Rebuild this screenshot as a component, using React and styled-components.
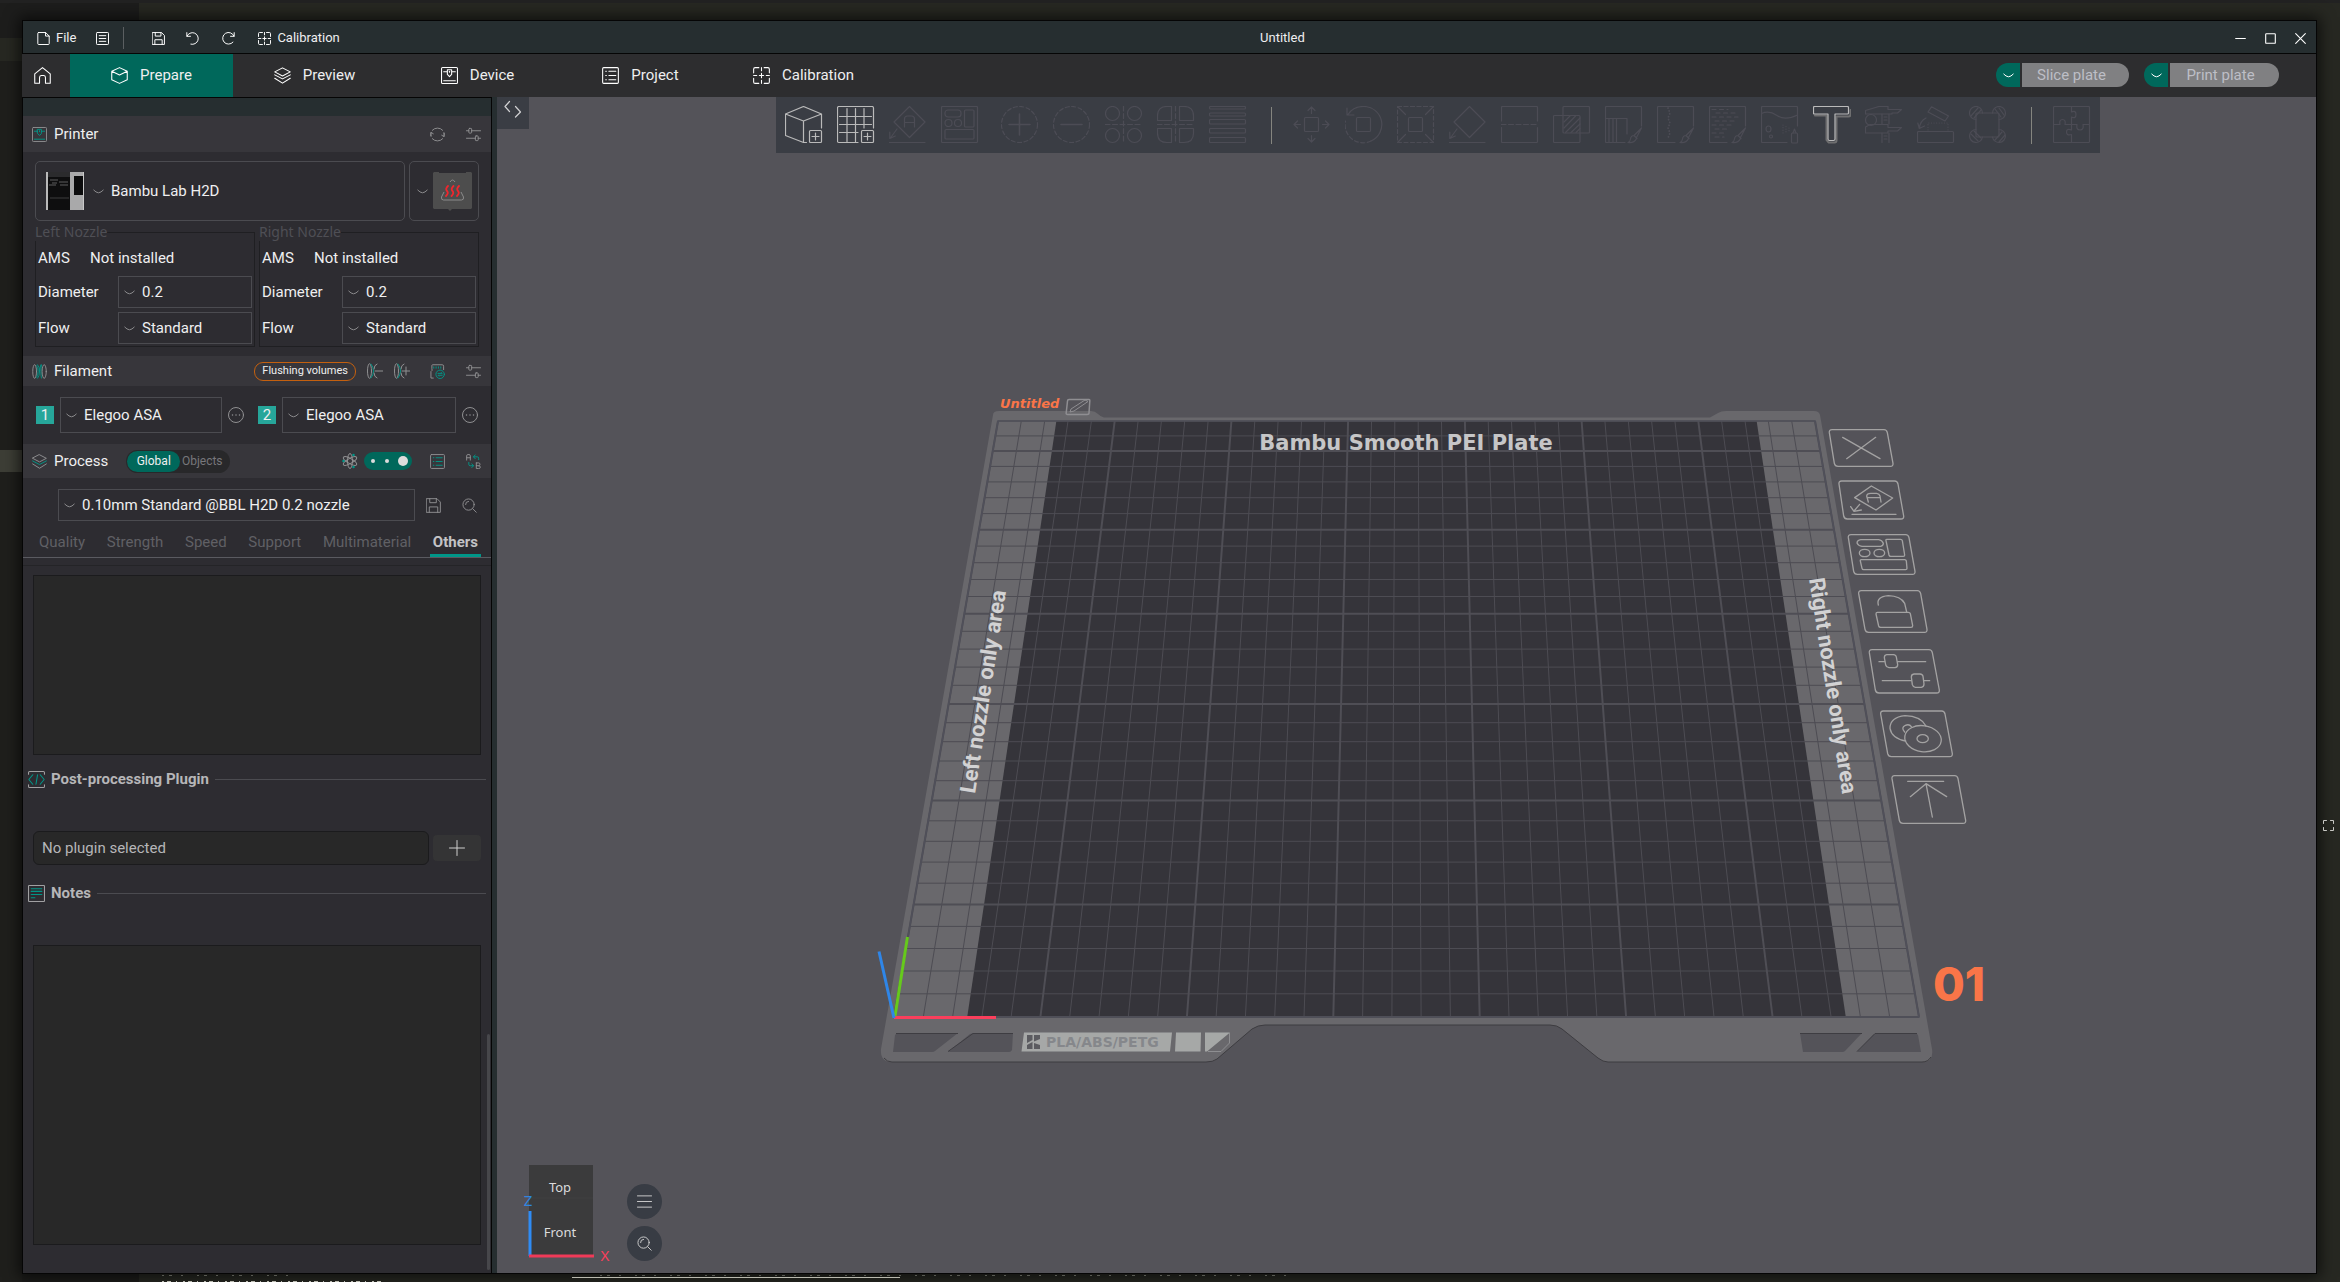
import React from "react";
import styled, { createGlobalStyle, css } from "styled-components";

const c = {
  black: "#050505",
  chrome: "#262e30",
  bar: "#2d2d2f",
  panel: "#2d2c31",
  section: "#37363b",
  line: "#4b4b50",
  field: "#282828",
  fieldLine: "#1b1b1d",
  text: "#efeff0",
  soft: "#b6b6b8",
  faint: "#606065",
  icon: "#909092",
  green: "#00685b",
  teal: "#009688",
  view: "#545359",
  strip: "#3a3d44",
  plate: "#69686c",
  bed: "#35343a",
  orange: "#fa7548",
};

const GlobalStyle = createGlobalStyle`
  * { box-sizing: border-box; }
  body {
    margin: 0;
    background: #272822;
    color: ${c.text};
    font: 15px/20px Roboto, "Noto Sans", sans-serif;
  }
  button, input, select, textarea { font: inherit; color: inherit; margin: 0; }
  button { padding: 0; border: 0; background: none; cursor: pointer; }
  svg { display: block; flex: none; }
`;

/* ---------- icons ---------- */

const Icon = ({ size = 15, box = 16, color = c.icon, w = 1, children, ...rest }) => (
  <svg
    width={size}
    height={size}
    viewBox={`0 0 ${box} ${box}`}
    fill="none"
    stroke={color}
    strokeWidth={w}
    strokeLinecap="round"
    strokeLinejoin="round"
    aria-hidden="true"
    {...rest}
  >
    {children}
  </svg>
);

const Chevron = ({ color = "#8a8a8c" }) => (
  <svg width="11" height="5" viewBox="0 0 11 5" fill="none" stroke={color} strokeWidth="1" aria-hidden="true">
    <path d="M.5 .8 Q3 3.6 5.5 3.8 Q8 3.6 10.5 .8" />
  </svg>
);

const calibrationPath = (
  <>
    <path d="M5.500.6H2Q.6.6.6 2V5.500M10.500.6H14Q15.400.6 15.400 2V5.500M5.500 15.400H2Q.6 15.400.6 14V10.500M10.500 15.400H14Q15.400 15.400 15.400 14V10.500" />
    <path d="M8 .6V3.500M8 12.500V15.400M.6 8H3.500M12.500 8H15.400M8 6V10M6 8H10" />
  </>
);
const printerGlyph = (accent) => (
  <>
    <rect x=".5" y=".5" width="15" height="15" rx="1" />
    <g stroke={accent}>
      <path d="M2.500 4.500H6M10 4.500h3.500M6 2.500h4v4.500L8 9 6 7zM2.500 13h11" />
      <path d="M8 4v1" />
    </g>
  </>
);
const layersGlyph = (accent) => (
  <>
    <path d="M8 .8L15.300 4.600 8 8.400.7 4.600z" />
    <path stroke={accent} d="M.7 7.400L8 11.200l7.300-3.800" />
    <path d="M.7 10.600L8 15.200l7.300-4.600" />
  </>
);
const sliders = (
  <>
    <path d="M.5 4H3M6 4h9.500M.5 12H10M13 12h2.500" />
    <rect x="3" y="1.500" width="3" height="5" rx=".8" />
    <rect x="10" y="9.500" width="3" height="5" rx=".8" />
  </>
);
const floppy = (
  <>
    <path d="M.7.7h11l3.600 3.600v11H.7z" />
    <path d="M4 .7v4.300h7V.7M3.500 15.300V9.500h9v5.800" />
  </>
);
const listGlyph = (accent) => (
  <>
    <rect x=".6" y=".6" width="14.800" height="14.800" rx="1" />
    <path stroke={accent} d="M3.500 4h.6M6.500 4H13M3.500 8h.6M6.500 8H13M3.500 12h.6M6.500 12H13" />
  </>
);
const magnifier = (
  <>
    <circle cx="7" cy="7" r="6" />
    <path d="M11.500 11.500L15.200 15.200M3.800 7A3.200 3.200 0 0 1 7 3.600" />
  </>
);

/* ---------- desktop and window ---------- */

const Desktop = styled.div`
  display: flex;
  flex-direction: column;
  height: 100vh;
  padding-top: 20px;
  overflow: hidden;
  background:
    linear-gradient(#222, #222) 0 0 / 100% 3px no-repeat,
    linear-gradient(#1d1d1c, #1d1d1c) 0 3px / 139px 35px no-repeat,
    linear-gradient(#3d3e36, #3d3e36) 0 450px / 22px 22px no-repeat,
    linear-gradient(#1f1f1c, #1f1f1c) 0 61px / 22px 100% no-repeat,
    linear-gradient(#1c1c1a, #1c1c1a) 0 100% / 139px 8px no-repeat,
    #272822;
`;

const DesktopRow = styled.div`
  display: flex;
  flex: 1;
  min-height: 0;
  padding-left: 22px;
`;

const DesktopEdge = styled.div`
  display: flex;
  align-items: center;
  justify-content: center;
  flex: none;
  width: 23px;
  padding-top: 356px;
`;

const DesktopFoot = styled.div`
  flex: none;
  height: 8px;
`;

const AppWindow = styled.div`
  display: flex;
  flex-direction: column;
  flex: 1;
  min-width: 0;
  border: 1px solid ${c.black};
  border-width: 1px 1px 1px 0;
  box-shadow: 0 0 14px 3px rgba(0, 0, 0, 0.65);
`;

const TitleBar = styled.header`
  display: flex;
  align-items: center;
  flex: none;
  height: 33px;
  padding: 2px 9px 0 14px;
  background: ${c.chrome};
  border: solid ${c.black};
  border-width: 0 0 1px 1px;
  font-size: 13px;
`;

const TitleButton = styled.button`
  display: flex;
  align-items: center;
  gap: 6px;
  height: 22px;
  margin-right: ${(p) => p.$after || 0}px;
`;

const TitleRule = styled.span`
  width: 1px;
  height: 22px;
  margin-right: 28px;
  background: #5b5f61;
`;

const TitleText = styled.h1`
  flex: 1;
  margin: 0;
  font: inherit;
  text-align: center;
`;

const WindowButton = styled.button`
  display: grid;
  place-items: center;
  width: 30px;
  height: 22px;
  &:last-child { width: 14px; margin-left: 8px; }
`;

const TabBar = styled.nav`
  display: flex;
  align-items: stretch;
  flex: none;
  height: 43px;
  background: ${c.bar};
`;

const HomeButton = styled.button`
  display: grid;
  place-items: center;
  width: 48px;
  padding-right: 7px;
`;

const MainTab = styled.button`
  display: flex;
  align-items: center;
  justify-content: center;
  gap: 12px;
  width: 163px;
  padding-bottom: 1px;
  background: ${(p) => (p.$active ? c.green : "transparent")};
`;

const TabActions = styled.div`
  display: flex;
  align-items: center;
  gap: 15px;
  margin-left: auto;
  padding: 0 37px 1px 0;
`;

const SplitButton = styled.div`
  display: flex;
  gap: 2px;
  height: 24px;
`;

const SplitMenu = styled.button`
  display: grid;
  place-items: center;
  width: 24px;
  border-radius: 12px 0 0 12px;
  background: ${c.green};
`;

const SplitMain = styled.button`
  width: ${(p) => p.$width}px;
  padding-right: 8px;
  border-radius: 0 12px 12px 0;
  background: #808082;
  color: #bdbec6;
`;

const Body = styled.div`
  display: flex;
  flex: 1;
  min-height: 0;
  background: ${c.chrome};
`;

/* ---------- sidebar ---------- */

const Sidebar = styled.aside`
  display: flex;
  flex-direction: column;
  flex: none;
  width: 470px;
  margin-right: 5px;
  padding-top: 18px;
  background: linear-gradient(${c.chrome} 18px, ${c.panel} 18px);
  border: solid ${c.black};
  border-width: 1px 1px 0 1px;
`;

const SectionBar = styled.div`
  display: flex;
  align-items: center;
  flex: none;
  gap: 7px;
  height: ${(p) => p.$height}px;
  padding: 0 10px 0 9px;
  background: ${c.section};
`;

const SectionTitle = styled.h2`
  margin: 0;
  font: inherit;
`;

const Tools = styled.div`
  display: flex;
  align-items: center;
  gap: ${(p) => p.$gap || 21}px;
  margin-left: auto;
  padding-left: ${(p) => p.$lead || 0}px;
`;

const IconButton = styled.button`
  display: grid;
  place-items: center;
`;

const PrinterRow = styled.div`
  display: flex;
  gap: 4px;
  padding: 9px 12px 2px;
`;

const PrinterCard = styled.button`
  display: flex;
  align-items: center;
  gap: ${(p) => p.$gap}px;
  flex: ${(p) => (p.$grow ? "1" : "none")};
  height: 60px;
  padding: 0 ${(p) => (p.$grow ? 10 : 6)}px 0 ${(p) => (p.$grow ? 10 : 7)}px;
  border: 1px solid ${c.line};
  border-radius: 5px;
  text-align: left;
`;

const PrinterName = styled.span`
  margin-left: -2px;
`;

const Nozzles = styled.div`
  display: grid;
  grid-template-columns: 1fr 1fr;
  gap: 4px;
  padding: 0 12px 9px;
`;

const NozzleBox = styled.fieldset`
  display: flex;
  flex-direction: column;
  gap: 4px;
  min-width: 0;
  margin: 0;
  padding: 0 2px 2px;
  border: 1px solid #1f1f22;
`;

const NozzleLegend = styled.legend`
  margin-left: -3px;
  padding: 0;
  color: #4f4f55;
  font: 14px/18px "Noto Sans", sans-serif;
`;

const NozzleStatus = styled.div`
  display: flex;
  align-items: center;
  height: 35px;
  margin-bottom: -4px;
  padding-bottom: 2px;
`;

const StatusKey = styled.span`
  width: 52px;
`;

const NozzleField = styled.label`
  display: flex;
  align-items: center;
`;

const FieldKey = styled.span`
  width: 80px;
`;

const ComboFrame = styled.span`
  display: grid;
  align-items: center;
  flex: 1;
  min-width: 0;
  height: ${(p) => p.$height || 32}px;
  border: 1px solid ${c.line};
  & > * { grid-area: 1 / 1; }
  & > svg { margin-left: 5px; pointer-events: none; }
`;

const ComboSelect = styled.select`
  width: 100%;
  height: 100%;
  padding: 0 4px 0 23px;
  border: 0;
  border-radius: 0;
  outline: 0;
  appearance: none;
  background: transparent;
`;

const Combo = ({ label, value, height }) => (
  <ComboFrame $height={height}>
    <ComboSelect aria-label={label} defaultValue={value}>
      <option>{value}</option>
    </ComboSelect>
    <Chevron />
  </ComboFrame>
);

const FlushButton = styled.button`
  height: 19px;
  padding: 0 7px;
  border: 1px solid #c4600f;
  border-radius: 9px;
  font-size: 11px;
  line-height: 16px;
`;

const FilamentRow = styled.div`
  display: grid;
  grid-template-columns: 208fr 220fr;
  gap: 14px;
  padding: 11px 13px;
`;

const FilamentSlot = styled.div`
  display: flex;
  align-items: center;
  gap: 6px;
  min-width: 0;
`;

const SlotBadge = styled.span`
  width: 18px;
  height: 18px;
  background: #26a69a;
  line-height: 18px;
  text-align: center;
`;

const ScopeSwitch = styled.div`
  display: flex;
  height: 23px;
  margin-left: 11px;
  padding: 1px;
  border-radius: 12px;
  background: #28282a;
  font-size: 12px;
`;

const ScopeOption = styled.button`
  width: ${(p) => p.$width}px;
  padding-right: ${(p) => (p.$active ? 0 : 5)}px;
  border-radius: 11px;
  background: ${(p) => (p.$active ? c.green : "transparent")};
  color: ${(p) => (p.$active ? c.text : "#77777b")};
`;

const ModeSwitch = styled.button`
  display: flex;
  align-items: center;
  justify-content: space-between;
  width: 48px;
  height: 18px;
  padding: 0 4px 0 7px;
  border-radius: 9px;
  background: ${c.green};
`;

const ModeDot = styled.span`
  width: ${(p) => (p.$on ? 10 : 4)}px;
  height: ${(p) => (p.$on ? 10 : 4)}px;
  border-radius: 50%;
  background: #dcdcdc;
`;

const PresetRow = styled.div`
  display: flex;
  align-items: center;
  padding: 11px 14px 0 35px;
`;

const PresetTools = styled.div`
  display: flex;
  gap: 21px;
  margin-left: 11px;
`;

const SettingTabs = styled.div`
  display: flex;
  justify-content: space-between;
  flex: none;
  height: 37px;
  padding: 0 10px 0 13px;
  border-bottom: 1px solid #5a5a60;
`;

const SettingTab = styled.button`
  padding: 11px 3px 2px;
  color: ${c.faint};
  border-bottom: 3px solid transparent;
  ${(p) => p.$active && css`
    color: #c3c3c5;
    font-weight: 700;
    border-color: ${c.teal};
  `}
`;

const SettingsScroll = styled.div`
  position: relative;
  flex: 1;
  min-height: 0;
  margin-top: 7px;
  padding: 9px 0 0;
  border-top: 1px solid #242427;
`;

const ScrollThumb = styled.span`
  position: absolute;
  right: 1px;
  bottom: 3px;
  width: 3px;
  height: 236px;
  border-radius: 2px;
  background: #47474b;
`;

const NoteBox = styled.textarea`
  display: block;
  width: calc(100% - 20px);
  height: ${(p) => p.$height}px;
  margin: 0 10px;
  padding: 6px;
  border: 1px solid ${c.fieldLine};
  outline: 0;
  resize: none;
  background: ${c.field};
`;

const GroupHeading = styled.h3`
  display: flex;
  align-items: center;
  gap: 6px;
  height: 20px;
  margin: ${(p) => p.$top}px 5px ${(p) => p.$bottom}px;
  color: ${c.soft};
  font-size: 15px;
  font-weight: 700;
  &::after {
    content: "";
    flex: 1;
    height: 1px;
    background: ${c.line};
  }
`;

const PluginRow = styled.div`
  display: flex;
  align-items: center;
  gap: 4px;
  padding: 0 10px;
`;

const PluginInput = styled.input`
  flex: 1;
  min-width: 0;
  height: 34px;
  padding: 0 8px;
  border: 1px solid ${c.fieldLine};
  border-radius: 6px;
  outline: 0;
  background: ${c.field};
  color: ${c.soft};
`;

const AddButton = styled.button`
  display: grid;
  place-items: center;
  width: 48px;
  height: 26px;
  border-radius: 4px;
  background: #343435;
`;

const Nozzle = ({ side }) => (
  <NozzleBox>
    <NozzleLegend>{side} Nozzle</NozzleLegend>
    <NozzleStatus>
      <StatusKey>AMS</StatusKey>
      <span>Not installed</span>
    </NozzleStatus>
    <NozzleField>
      <FieldKey>Diameter</FieldKey>
      <Combo label={`${side} diameter`} value="0.2" />
    </NozzleField>
    <NozzleField>
      <FieldKey>Flow</FieldKey>
      <Combo label={`${side} flow`} value="Standard" />
    </NozzleField>
  </NozzleBox>
);

const Filament = ({ index, name }) => (
  <FilamentSlot>
    <SlotBadge>{index}</SlotBadge>
    <Combo label={`Filament ${index}`} value={name} height={36} />
    <IconButton aria-label={`Edit filament ${index}`}>
      <Icon size={16}>
        <circle cx="8" cy="8" r="7.500" />
        <path strokeWidth="1.500" d="M4.500 8h.01M8 8h.01M11.500 8h.01" />
      </Icon>
    </IconButton>
  </FilamentSlot>
);

const PrinterPicture = () => (
  <svg width="38" height="38" viewBox="0 0 38 38" aria-hidden="true">
    <rect width="38" height="38" fill="#0e0e0f" />
    <rect width="24" height="5" fill="#2b2b2d" />
    <rect width="2" height="38" fill="#b9b9b9" />
    <path d="M4 8h8M13 10h9M3 13h7M14 13h8M6 11h5" stroke="#5c5c5e" />
    <path d="M4 26h19" stroke="#3d3d3f" />
    <rect x="24" width="14" height="38" fill="#a9a9aa" />
    <rect x="28" y="4" width="10" height="19" fill="#0c0c0d" />
    <rect x="37" width="1" height="38" fill="#c9c9c9" />
  </svg>
);

const PlatePicture = () => (
  <svg width="39" height="39" viewBox="0 0 39 39" fill="none" aria-hidden="true">
    <path fill="#4d4d4d" d="M1 0h5v1h27V0h5l1 1v35l-1 1H19l-2 2-2-2H1l-1-1V1z" />
    <path stroke="#8b8b8b" d="M17 10Q19.500 6 22 10M11 20L8.500 25Q8 28 10.500 28H28.500Q31 28 30.500 25L28 20" />
    <path
      stroke="#f0262d"
      strokeWidth="1.800"
      strokeLinecap="round"
      d="M15 14q-3 3-1 5t-1 5M20.500 14q-3 3-1 5t-1 5M26 14q-3 3-1 5t-1 5"
    />
  </svg>
);

const settingTabs = ["Quality", "Strength", "Speed", "Support", "Multimaterial", "Others"];

const SettingsPanel = () => (
  <Sidebar>
    <SectionBar $height={36}>
      <Icon>{printerGlyph(c.teal)}</Icon>
      <SectionTitle>Printer</SectionTitle>
      <Tools>
        <IconButton aria-label="Sync printer">
          <Icon>
            <path d="M2.500 3.500A7.300 7.300 0 0 1 13.500 3.500M13.500 12.500A7.300 7.300 0 0 1 2.500 12.500" />
            <path d="M1.200 9.800Q.4 8 1 5.800M14.800 6.200Q15.600 8 15 10.200M.8 9.500L1.200 5.800 3.500 7.200M15.200 6.500L14.800 10.200 12.500 8.800" />
          </Icon>
        </IconButton>
        <IconButton aria-label="Printer settings"><Icon>{sliders}</Icon></IconButton>
      </Tools>
    </SectionBar>
    <PrinterRow>
      <PrinterCard $grow $gap={9}>
        <PrinterPicture />
        <Chevron />
        <PrinterName>Bambu Lab H2D</PrinterName>
      </PrinterCard>
      <PrinterCard $gap={5} aria-label="Plate type">
        <Chevron />
        <PlatePicture />
      </PrinterCard>
    </PrinterRow>
    <Nozzles>
      <Nozzle side="Left" />
      <Nozzle side="Right" />
    </Nozzles>

    <SectionBar $height={30}>
      <Icon>
        <ellipse cx="2.800" cy="8" rx="2" ry="7.300" />
        <g stroke={c.teal}>
          <path d="M6 .8Q8 3 8 8T6 15.200M9.500 .8Q8 4 8 8" />
          <path d="M5 2Q6.500 5 6.500 8T5 14M10 1Q9.500 4 9.500 8T10 15" />
        </g>
        <ellipse cx="13" cy="8" rx="2.200" ry="7.300" />
      </Icon>
      <SectionTitle>Filament</SectionTitle>
      <Tools $gap={11}>
        <FlushButton>Flushing volumes</FlushButton>
        <IconButton aria-label="Remove filament">
          <Icon size={16}>
            <ellipse cx="2.500" cy="8" rx="2" ry="7.300" />
            <path stroke={c.teal} d="M4 1Q6.500 4 6.500 8T4 15" />
            <path d="M10 1Q7 2 7 6M10 15Q7 14 7 10M8 8h8" />
          </Icon>
        </IconButton>
        <IconButton aria-label="Add filament">
          <Icon size={16}>
            <ellipse cx="2.500" cy="8" rx="2" ry="7.300" />
            <path stroke={c.teal} d="M4 1Q6.500 4 6.500 8T4 15" />
            <path d="M10 1Q7 2 7 6M10 15Q7 14 7 10M8 8h8M12 4v8" />
          </Icon>
        </IconButton>
        <Tools $lead={9}>
          <IconButton aria-label="Sync filaments">
            <Icon>
              <path d="M3.500 15H1V8Q3 7 2 5V1.500Q2 .8 3 .8h10q1.500 0 1.500 1.500V6" />
              <g stroke={c.teal}>
                <path d="M4 3v1.500M6.500 3v1.500M9 3v1.500M11.500 3v1.500" />
                <circle cx="10.800" cy="11" r="4.500" />
                <path d="M8.500 10h4.500l-1-1M13 12H8.500l1 1" />
              </g>
            </Icon>
          </IconButton>
          <IconButton aria-label="Filament settings"><Icon>{sliders}</Icon></IconButton>
        </Tools>
      </Tools>
    </SectionBar>
    <FilamentRow>
      <Filament index="1" name="Elegoo ASA" />
      <Filament index="2" name="Elegoo ASA" />
    </FilamentRow>

    <SectionBar $height={34}>
      <Icon>{layersGlyph(c.teal)}</Icon>
      <SectionTitle>Process</SectionTitle>
      <ScopeSwitch>
        <ScopeOption $active $width={53}>Global</ScopeOption>
        <ScopeOption $width={49}>Objects</ScopeOption>
      </ScopeSwitch>
      <Tools $gap={6}>
        <Icon size={16}>
          <ellipse cx="8" cy="8" rx="2.500" ry="7.500" />
          <ellipse cx="8" cy="8" rx="2.500" ry="7.500" transform="rotate(60 8 8)" />
          <ellipse cx="8" cy="8" rx="2.500" ry="7.500" transform="rotate(120 8 8)" />
          <path stroke={c.teal} strokeWidth="2.500" d="M11.500 2h.01M1.500 8h.01M11.500 14h.01" />
        </Icon>
        <ModeSwitch aria-label="Expert mode">
          <ModeDot />
          <ModeDot />
          <ModeDot $on />
        </ModeSwitch>
      </Tools>
      <PresetTools>
        <IconButton aria-label="Compare list"><Icon>{listGlyph(c.teal)}</Icon></IconButton>
        <IconButton aria-label="Compare presets">
          <Icon>
            <path d="M.7 6.500V2Q.7.6 2 .6h1.200Q4.600.6 4.600 2v4.500M.7 4h3.900" />
            <path d="M11 9.500h2.500q1.400 0 1.400 1.500T13.500 12.500H11M13.500 12.500q1.800 0 1.800 1.500t-1.800 1.500H11v-6" />
            <path stroke={c.teal} d="M13.500 6V4.500Q13.500 3 12 3H8M9.800 1L8 3l1.800 2M3 9v2q0 1.500 1.500 1.500H8M6.200 10.500L8 12.500l-1.800 2" />
          </Icon>
        </IconButton>
      </PresetTools>
    </SectionBar>
    <PresetRow>
      <Combo label="Process preset" value="0.10mm Standard @BBL H2D 0.2 nozzle" />
      <PresetTools>
        <IconButton aria-label="Save preset"><Icon>{floppy}</Icon></IconButton>
        <IconButton aria-label="Search settings"><Icon>{magnifier}</Icon></IconButton>
      </PresetTools>
    </PresetRow>
    <SettingTabs role="tablist">
      {settingTabs.map((name) => (
        <SettingTab key={name} role="tab" aria-selected={name === "Others"} $active={name === "Others"}>
          {name}
        </SettingTab>
      ))}
    </SettingTabs>

    <SettingsScroll>
      <NoteBox $height={180} aria-label="Post-processing scripts" />
      <GroupHeading $top={14} $bottom={42}>
        <Icon size={17} color="#a0a0a2">
          <path d="M.5 3V1.500Q.5.5 1.500.5h13q1 0 1 1V3M.5 13v1.500q0 1 1 1h13q1 0 1-1V13" />
          <path stroke={c.teal} d="M4.500 3.500L.8 8l3.700 4.500M11.500 3.500L15.200 8l-3.700 4.500M9 3.500l-1.500 9" />
        </Icon>
        Post-processing Plugin
      </GroupHeading>
      <PluginRow>
        <PluginInput aria-label="Plugin" defaultValue="No plugin selected" readOnly />
        <AddButton aria-label="Add plugin">
          <Icon size={16} color="#cfcfcf"><path d="M8 .5v15M.5 8h15" /></Icon>
        </AddButton>
      </PluginRow>
      <GroupHeading $top={18} $bottom={42}>
        <Icon size={17} color="#a0a0a2">
          <rect x=".5" y=".5" width="15" height="15" rx=".5" />
          <path stroke={c.teal} d="M3 3.500h10M3 6h10M3 9h10M3 12h3.500" />
        </Icon>
        Notes
      </GroupHeading>
      <NoteBox $height={300} aria-label="Notes" />
      <ScrollThumb />
    </SettingsScroll>
  </Sidebar>
);

/* ---------- 3D view ---------- */

const Viewport = styled.main`
  position: relative;
  flex: 1;
  min-width: 0;
  overflow: hidden;
  background: ${c.view};
`;

const ViewTop = styled.div`
  display: flex;
  align-items: flex-start;
`;

const CollapseButton = styled.button`
  display: grid;
  place-items: center;
  flex: none;
  width: 32px;
  height: 32px;
  margin-right: 31px;
  padding-bottom: 8px;
  background: ${c.strip};
`;

const ToolStrip = styled.div`
  display: flex;
  align-items: center;
  gap: 14px;
  height: 56px;
  margin: 0 auto;
  padding: 0 9px;
  background: ${c.strip};
`;

const ToolButton = styled.button`
  width: 38px;
  height: 38px;
  margin-right: ${(p) => (p.$spaced ? 8 : 0)}px;
`;

const ToolRule = styled.span`
  width: 1px;
  height: 37px;
  margin: 0 7px 0 10px;
  background: #85857f;
`;

const diamond = <path d="M20.500.5L36 16 20.500 31.500 5 16z" />;
const fallArrow = <path d="M8 23L1 32.500M.8 26v6.500l5.500-2.500M0 36.500h36" />;
const brush = <path d="M36.500 22l-5 9.500M36.500 22l-7.500 7.500M29 29.500l3 3M29 29.500q-3 0-3.500 3.500-.5 3-2.500 3.500 6 1 8.500-4" />;
const sheet = (bottom) => <path d={`M36.500 20V1.500q0-1-1-1H1.500q-1 0-1 1v34q0 1 1 1H${bottom}`} />;

const tools = [
  ["Add object", true, <>
    <path d="M18.500.5L36.500 8 18.500 15 .5 8zM.5 8v21.500L18.500 36.500h3M18.500 15v21M36.500 8v14" />
    <rect x="24.500" y="24.500" width="12" height="12" rx="1" />
    <path d="M30.500 27v7M27 30.500h7" />
  </>],
  ["Add plate", true, <>
    <path d="M21 36.500H2q-1.500 0-1.500-1.500V2Q.5.5 2 .5h33q1.500 0 1.500 1.500v20" />
    <path d="M10 2.500v33M18.500 2.500v33M27 2.500V22M2.500 10.500h32M2.500 18.500h32M2.500 26.500H21" />
    <rect x="24.500" y="24.500" width="12" height="12" rx="1" />
    <path d="M30.500 27v7M27 30.500h7" />
  </>],
  ["Auto orient", false, <>
    {diamond}{fallArrow}
    <path d="M15.500 21v-8q0-3 3-3h4q3 0 3 3v8M15.500 16.500h10" />
  </>],
  ["Arrange", false, <>
    <rect x=".5" y=".5" width="36" height="36" rx="1" />
    <rect x="4" y="4" width="16" height="7" rx="3" />
    <circle cx="7.500" cy="17" r="3.500" /><circle cx="17" cy="17" r="3.500" />
    <rect x="23.500" y="4" width="9.500" height="17" rx="1" />
    <rect x="4" y="23.500" width="29" height="9.500" rx="1" />
  </>, true],
  ["Add instance", false, <>
    <circle cx="18.500" cy="18.500" r="18" strokeDasharray="4 2.500" />
    <path strokeWidth="1.600" d="M18.500 8v21M8 18.500h21" />
  </>],
  ["Remove instance", false, <>
    <circle cx="18.500" cy="18.500" r="18" strokeDasharray="4 2.500" />
    <path strokeWidth="1.600" d="M8 18.500h21" />
  </>],
  ["Split to objects", false, <>
    <circle cx="7.500" cy="7.500" r="7" /><circle cx="29.500" cy="7.500" r="7" />
    <circle cx="7.500" cy="29.500" r="7" /><circle cx="29.500" cy="29.500" r="7" />
    <path strokeDasharray="5 2.500" d="M18.500 0v37M0 18.500h37" />
  </>],
  ["Split to parts", false, <>
    <path d="M14.500.5v14H.5V10Q.5.5 10 .5zM22.500.5v14h14V10Q36.500.5 27 .5zM14.500 36.500v-14H.5V27q0 9.500 9.500 9.500zM22.500 36.500v-14h14V27q0 9.500-9.500 9.500z" />
    <path strokeDasharray="5 2.500" d="M18.500 0v37M0 18.500h37" />
  </>],
  ["Layer height", false, <>
    <rect x=".5" y=".5" width="36" height="2.500" rx="1" /><rect x=".5" y="7" width="36" height="3" rx="1" />
    <rect x=".5" y="13.500" width="36" height="4.500" rx="1" /><rect x=".5" y="22.500" width="36" height="4.500" rx="1" />
    <rect x=".5" y="31.500" width="36" height="5" rx="1" />
  </>],
  null,
  ["Move", false, <>
    <rect x="11.500" y="11.500" width="14" height="14" rx="1" />
    <path d="M18.500 1v6.500M15 4.500L18.500 1 22 4.500M18.500 36v-6.500M15 32.500l3.500 3.500 3.500-3.500M1 18.500h6.500M4.500 15L1 18.500 4.500 22M36 18.500h-6.500M32.500 15l3.500 3.500-3.500 3.500" />
  </>],
  ["Rotate", false, <>
    <rect x="11.500" y="11.500" width="14" height="14" rx="1" />
    <path d="M3 8.500Q8 .5 18.500.5A18 18 0 0 1 26 35M2 2v7h7" />
    <path strokeDasharray="4 2.500" d="M26 35A18 18 0 0 1 .5 15" />
  </>],
  ["Scale", false, <>
    <rect x="11.500" y="11.500" width="14" height="14" rx="1" />
    <rect x=".5" y=".5" width="36" height="36" strokeDasharray="4 2.500" />
    <path d="M1 1l7.500 7.500M36 1l-7.500 7.500M1 36l7.500-7.500M36 36l-7.500-7.500" />
  </>],
  ["Lay on face", false, <>{diamond}{fallArrow}</>],
  ["Cut", false, <>
    <path d="M.5 15V1.500q0-1 1-1h34q1 0 1 1V15M.5 21.500v14q0 1 1 1h34q1 0 1-1v-14" />
    <path strokeDasharray="5 2.500" d="M0 18.500h37" />
  </>],
  ["Mesh boolean", false, <>
    <rect x=".5" y="9.500" width="26.500" height="27" rx="1" />
    <rect x="10" y=".5" width="26.500" height="26.500" rx="1" />
    <path d="M11 16l6-6M11 22L22.500 10M12.500 26.500L27 12M18 26.500L27 18M23 26.500l4-4" />
  </>],
  ["Supports", false, <>{sheet(20)}<path d="M.5 12.500H22V28M4 13v23M8 13v23M11.500 13v23" />{brush}</>],
  ["Seam", false, <>{sheet(18)}<path strokeDasharray=".1 3" strokeWidth="1.800" d="M11 2l2 5-2 5 2 5-2 5 2 5-2 5" />{brush}</>],
  ["Colour painting", false, <>{sheet(18)}<path strokeDasharray="4 3.500" d="M3 3.500h16M7 7h22M3 11h26M6 15h20M3 19h20M6 23h14M3 27h14M6 31h9" />{brush}</>],
  ["Fuzzy skin", false, <>
    {sheet(26)}
    <path d="M.5 7.500Q8 4 16 9.500T36.500 9" />
    <ellipse cx="7.500" cy="23" rx="2.500" ry="3" /><circle cx="10" cy="30.500" r="1.500" />
    <rect x="30.500" y="27" width="6" height="10" rx="1" /><path d="M32 27l1.500-4 1.500 4" />
    <path strokeDasharray=".1 2.500" d="M22 19v9M25 20.500v6M28 22v3" />
  </>],
  ["Text", true, <>
    <path stroke="#6f6f70" strokeWidth="2" d="M2 9.500h11.500V34l2 2.500h6q2 0 2-2V10.500h12q2 0 2-2V4" />
    <path d="M1.500.5h33q1 0 1 1v5.500q0 1-1 1H22v25q0 1.500-1.500 1.500h-4q-1.500 0-1.500-1.500V8H1.500q-1 0-1-1V1.500q0-1 1-1z" />
  </>],
  ["Measure", false, <>
    <path d="M.5 4.500L14 .5h9v3h13.500l-4 3.500H27v1H.5zM.5 21L5 18.500h18v3h13.500l-4 3.500H23v2H.5z" />
    <circle cx="6" cy="14" r="5.500" />
    <path d="M17 8v10M24 8v10M19 11h3M19 14h3M17 27v9.500M24 27v9.500M19 30h3M19 33h3" />
  </>],
  ["Assemble", false, <>
    <rect x=".5" y="25.500" width="36" height="11" rx="1" />
    <path d="M14.500.8l17 9.200-3.500 5-17-9zM9 12q-6 3-6.500 10M.8 17l1.500 5.500L7.500 20" />
    <path strokeDasharray=".1 2.500" d="M11 24v-7h20v7" />
  </>],
  ["Brim ears", false, <>
    <rect x="7" y="7" width="23" height="24" rx="1" />
    <path d="M7 13.500A6.500 6.500 0 1 1 13.500 7M23.500 7A6.500 6.500 0 1 1 30 13.500M7 23.500A6.500 6.500 0 1 0 13.500 31M23.500 31A6.500 6.500 0 1 0 30 23.500" />
    <path d="M2 10l7-8M5 12l7-8M26 3l6 8M30 2l5 7M2 28l7 7M5 25l7 7M26 34l7-8M30 36l6-7" />
  </>],
  null,
  ["Assembly view", false, <>
    <rect x=".5" y=".5" width="36" height="36" rx="1" />
    <path d="M18.500.5V6Q23 4 23 8.500T18.500 11V18.500H12Q13 13.500 9.500 13.500T7 18.500H.5M18.500 18.500V24Q13.500 22 13.500 26T18.500 28.500V36.500M18.500 18.500H24Q23 24 27 24T30 18.500H36.500" />
  </>],
];

const Bed = styled.div`
  position: relative;
  width: 1201px;
  height: 690px;
  margin: 237px auto 0;
`;

const PlateButton = styled.button`
  position: absolute;
  left: ${(p) => p.$x}px;
  top: ${(p) => p.$y}px;
`;

const LEFT = { near: 894, far: 998 };
const RIGHT = { near: 1919, far: 1815 };
const NEAR_Y = 1017;
const FAR_Y = 421;
const DEPTH = (RIGHT.near - LEFT.near) / (RIGHT.far - LEFT.far);

/* Maps a bed position (0..1 across, 0..1 away from the viewer) to the view. */
const project = (u, v) => {
  const f = (DEPTH * v) / (1 - v + DEPTH * v);
  const l = LEFT.near + (LEFT.far - LEFT.near) * f;
  const r = RIGHT.near + (RIGHT.far - RIGHT.near) * f;
  return [l + (r - l) * u, NEAR_Y + (FAR_Y - NEAR_Y) * f];
};
const segment = (a, b) => `M${a[0].toFixed(1)} ${a[1].toFixed(1)}L${b[0].toFixed(1)} ${b[1].toFixed(1)}`;
const quad = (u0, u1) => [project(u0, 0), project(u0, 1), project(u1, 1), project(u1, 0)].map((p) => p.join(",")).join(" ");

const gridLines = (major) => {
  const out = [];
  for (let i = 0; i <= 35; i += 1) if ((i % 5 === 0) === major) out.push(segment(project(i / 35, 0), project(i / 35, 1)));
  for (let j = 0; j <= 32; j += 1) if ((j % 5 === 0) === major) out.push(segment(project(0, j / 32), project(1, j / 32)));
  return out.join("");
};

const nozzleFont = { fontFamily: 'Roboto, "Noto Sans", sans-serif', fontWeight: 700, fontSize: 22 };
const wideFont = { fontFamily: '"DejaVu Sans", sans-serif', fontWeight: 700 };

const BedDrawing = () => (
  <svg width="1200" height="690" viewBox="806 390 1200 690" fill="none">
    <path
      fill={c.plate}
      d="M993 415Q993 411 999 411H1091Q1095 411 1098 414T1104 417.500H1710L1718 413Q1721 411 1726 411H1814Q1819 411 1820 415L1932 1049Q1934 1062 1922 1062H1608Q1603 1062 1598 1058L1562 1029Q1557 1025 1550 1025H1265Q1258 1025 1252 1029L1217 1059Q1213 1062 1206 1062H892Q880 1062 881 1049z"
    />
    <path
      stroke="#3d3c40"
      d="M884 1058Q887 1062 892 1062H1206Q1213 1062 1217 1059L1252 1029Q1258 1025 1265 1025H1550Q1557 1025 1562 1029L1598 1058Q1603 1062 1608 1062H1922Q1928 1062 1931 1057"
    />
    <polygon points={quad(2.5 / 35, 32.5 / 35)} fill={c.bed} />
    <path d={gridLines(false)} stroke="#4d4c53" />
    <path d={gridLines(true)} stroke="#4f4e55" strokeWidth="2" />
    <polygon points={quad(0, 1)} stroke="#50505a" strokeWidth="1.500" />

    <g fill={c.view}>
      <path d="M897 1033H958L935 1051Q934 1052 932 1052H893L895 1035z" />
      <path d="M973 1033H1013L1012 1050Q1011 1052 1009 1052H948L970 1034z" />
      <path d="M1800 1033H1862L1845 1051Q1844 1052 1842 1052H1803z" />
      <path d="M1876 1033H1916L1918 1035 1921 1052H1857L1873 1035z" />
    </g>
    <path stroke="#3e3d42" d="M896 1033.500H958M948 1051.500L973 1033.500H1013M1800 1033.500H1862M1857 1051.500L1875 1033.500H1917" />

    <path fill="#a6a8a7" d="M1024 1032.500H1172L1170 1051.500H1021.500zM1176 1032.500H1201L1200.500 1051.500H1175zM1205 1032.500H1230L1207 1051.500H1205z" />
    <path stroke="#8e8e91" d="M1229.500 1033V1043L1221 1051.500H1208" />
    <path fill="#5b5b60" d="M1027 1035H1032.500V1040L1027 1043zM1034 1035H1040V1039L1034 1041.500zM1027 1045L1032.500 1042V1049H1027zM1034 1043L1040 1045V1049H1034z" />
    <text x="1046" y="1047" fontSize="14" fill="#85878b" style={wideFont}>PLA/ABS/PETG</text>

    <text x="1406" y="450" fontSize="21" textAnchor="middle" fill="#c6c6c7" style={wideFont}>Bambu Smooth PEI Plate</text>
    <text x="1000" y="408" fontSize="13" fontStyle="italic" fill={c.orange} style={wideFont}>Untitled</text>
    <text transform="translate(975 794) rotate(-81.300)" fill="#d2d2d3" style={nozzleFont}>Left nozzle only area</text>
    <text transform="translate(1809 579) rotate(81.200)" fill="#d2d2d3" style={nozzleFont}>Right nozzle only area</text>
    <text x="1933" y="1001" fontSize="46" fontWeight="800" fill={c.orange} fontFamily="Inter, sans-serif">01</text>

    <path stroke="#fa3f5c" strokeWidth="3" d="M894 1017.500H996" />
    <path stroke="#66c91c" strokeWidth="3" d="M895 1016L907.500 937" />
    <path stroke="#2f86e8" strokeWidth="3" d="M894 1018L879 951.500" />
  </svg>
);

/* Plate controls lie in the plane of the bed, so each outline is a leaning quad. */
const leaning = ([x0, y0, x1, x2, y1, x3]) =>
  `M${x0 + 8} ${y0}H${x1 - 8}Q${x1} ${y0} ${x1 + 2} ${y0 + 9}L${x2 - 1} ${y1 - 9}Q${x2} ${y1} ${x2 - 9} ${y1}H${x3 + 9}Q${x3} ${y1} ${x3 - 2} ${y1 - 9}L${x0} ${y0 + 9}Q${x0 - 1} ${y0} ${x0 + 8} ${y0}z`;

const plateControls = [
  ["Delete plate", [808, 149, 980, 1000, 259, 825], <path d="M848 172L960 236M947 172L860 236" />],
  ["Auto orient plate", [837, 303, 1012, 1032, 417, 853], <>
    <path d="M934 318L998 354 948 390 884 353zM925 366L920 348Q921 340 932 340H950Q958 341 960 348L963 366M922 353H961" />
    <path d="M899 373L882 393M872 380L882 394 904 390M876 403H1008" />
  </>],
  ["Arrange plate", [865, 464, 1045, 1066, 583, 883], <>
    <path d="M902 479H956Q966 480 970 490 970 498 962 499H906Q895 498 891 489 892 480 902 479zM980 478H1022Q1026 478 1027 482L1034 525Q1034 529 1030 529H992Q988 529 987 525L978 482Q977 478 980 478zM904 539H1034Q1038 539 1039 543L1041 565Q1041 569 1037 569H911Q907 569 906 565L901 543Q900 539 904 539z" />
    <ellipse cx="914" cy="519" rx="16" ry="11" /><ellipse cx="958" cy="519" rx="16" ry="11" />
  </>],
  ["Lock plate", [896, 632, 1080, 1102, 757, 917], <>
    <path d="M955 675Q948 650 985 647 1022 648 1034 670L1040 696" />
    <path d="M952 697H1045Q1050 697 1051 701L1058 737Q1058 742 1053 742H962Q957 742 956 738L948 702Q948 697 952 697z" />
  </>],
  ["Plate settings", [928, 809, 1115, 1139, 939, 948], <>
    <path d="M957 845H974M1013 845H1097M967 902H1054M1092 902H1109" />
    <path d="M980 824H1000Q1008 825 1009 831L1013 854Q1013 862 1005 863H987Q979 862 977 855L973 833Q973 825 980 824zM1062 882H1080Q1088 883 1089 889L1092 912Q1092 921 1084 922H1066Q1059 921 1057 914L1054 891Q1054 883 1062 882z" />
  </>],
  ["Filament map", [962, 993, 1153, 1178, 1130, 985], <>
    <path d="M1037 1083Q995 1075 990 1045 990 1012 1035 1007 1082 1008 1098 1038M1034 1056Q1022 1043 1036 1036 1048 1031 1054 1040" />
    <ellipse cx="1089" cy="1076" rx="55" ry="39" transform="rotate(8 1089 1076)" />
    <ellipse cx="1088" cy="1076" rx="17" ry="12" />
  </>],
  ["Move plate to front", [996, 1187, 1192, 1218, 1330, 1020], <path d="M1043 1204H1151M1117 1311L1098 1211M1051 1250L1098 1211 1160 1250" />],
];

const EditPlateIcon = () => (
  <svg width="26" height="18" viewBox="0 0 26 18" fill="none" stroke="#8f8e92" aria-hidden="true">
    <path strokeWidth="1.500" d="M4 1.500H24Q25 1.500 24.800 3L24 15Q24 16.500 22 16.500H2.500Q1 16.500 1.200 15L2.500 3Q2.500 1.500 4 1.500z" />
    <path d="M5 14l1-3L20 2l3 1.500L9 13z" />
  </svg>
);

const ViewCorner = styled.div`
  position: absolute;
  left: 26px;
  bottom: 8px;
  display: flex;
  align-items: flex-end;
  gap: 11px;
`;

const RoundTools = styled.div`
  display: flex;
  flex-direction: column;
  gap: 7px;
  padding-bottom: 4px;
`;

const RoundButton = styled.button`
  display: grid;
  place-items: center;
  width: 35px;
  height: 35px;
  border-radius: 50%;
  background: #383c44;
`;

const ViewCube = () => (
  <svg width="93" height="104" viewBox="523 1161 93 104" fontFamily='"Noto Sans", sans-serif' fontSize="13">
    <rect x="529" y="1165" width="64" height="90" fill="#3b3b3c" />
    <path d="M529 1198H593" stroke="#404041" />
    <text x="560" y="1192" textAnchor="middle" fill="#dcdcdc">Top</text>
    <text x="560" y="1237" textAnchor="middle" fill="#dcdcdc">Front</text>
    <path d="M530 1256V1211" stroke="#2f8cf5" strokeWidth="3" />
    <path d="M529 1256H594" stroke="#f03a58" strokeWidth="3" />
    <g fontSize="15">
      <text x="528" y="1206" textAnchor="middle" fill="#2f86e0">Z</text>
      <text x="605" y="1261" textAnchor="middle" fill="#fa3f5c">X</text>
    </g>
  </svg>
);

const PlateView = () => (
  <Viewport>
    <ViewTop>
      <CollapseButton aria-label="Toggle sidebar">
        <Icon size={18} box={18} color="#d0d0d2" w={1.2}>
          <path d="M5.500 1.500L1 6.500l4.500 5M11.500 6.500l5 5.500-5 5" />
        </Icon>
      </CollapseButton>
      <ToolStrip role="toolbar">
        {tools.map((t, i) =>
          t ? (
            <ToolButton key={t[0]} aria-label={t[0]} disabled={!t[1]} $spaced={t[3]}>
              <Icon size={38} box={38} color={t[1] ? "#bababa" : "#4c4c55"} w={1.2}>{t[2]}</Icon>
            </ToolButton>
          ) : (
            <ToolRule key={i} />
          )
        )}
      </ToolStrip>
    </ViewTop>
    <Bed>
      <BedDrawing />
      <PlateButton $x={259} $y={8} aria-label="Rename plate"><EditPlateIcon /></PlateButton>
      {plateControls.map(([name, q, drawing]) => {
        const x = Math.floor(q[0] / 3) - 2;
        const y = Math.floor(q[1] / 3) - 2;
        const w = Math.ceil(q[3] / 3) + 2 - x;
        const h = Math.ceil(q[4] / 3) + 2 - y;
        return (
          <PlateButton key={name} $x={754 + x} $y={y - 10} aria-label={name}>
            <svg
              width={w}
              height={h}
              viewBox={`${x * 3} ${y * 3} ${w * 3} ${h * 3}`}
              fill="none"
              stroke="#a3a2a2"
              strokeWidth="4"
              strokeLinecap="round"
              strokeLinejoin="round"
            >
              <path d={leaning(q)} />
              {drawing}
            </svg>
          </PlateButton>
        );
      })}
    </Bed>
    <ViewCorner>
      <ViewCube />
      <RoundTools>
        <RoundButton aria-label="View menu">
          <Icon color="#d0d0d0"><path d="M.5 2h15M.5 8h15M.5 14h15" /></Icon>
        </RoundButton>
        <RoundButton aria-label="Zoom to fit"><Icon color="#d0d0d0">{magnifier}</Icon></RoundButton>
      </RoundTools>
    </ViewCorner>
  </Viewport>
);

/* ---------- application ---------- */

const mainTabs = [
  ["Prepare", <path d="M8 .6L15.300 4v8L8 15.400.7 12V4zM.7 4L8 7.500 15.300 4" />],
  ["Preview", layersGlyph("#fff")],
  ["Device", printerGlyph("#fff")],
  ["Project", listGlyph("#fff")],
  ["Calibration", calibrationPath],
];

export default function App() {
  return (
    <Desktop>
      <GlobalStyle />
      <DesktopRow>
        <AppWindow>
          <TitleBar>
            <TitleButton $after={20}>
              <Icon size={13} color="#fff" w={1.2}><path d="M2 .6h8.500L15 5v9.400q0 1-1 1H2q-1 0-1-1V1.600q0-1 1-1zM10.500.6V5H15" /></Icon>
              File
            </TitleButton>
            <TitleButton $after={14} aria-label="Menu">
              <Icon size={13} color="#fff" w={1.2}><rect x=".6" y=".6" width="14.800" height="14.800" rx="1" /><path d="M4 4.500h8M4 8h8M4 11.500h8" /></Icon>
            </TitleButton>
            <TitleRule />
            <TitleButton $after={21} aria-label="Save"><Icon size={13} color="#fff" w={1.2}>{floppy}</Icon></TitleButton>
            <TitleButton $after={23} aria-label="Undo">
              <Icon size={13} color="#fff" w={1.2}><path d="M1 .8v4.500h4.500M1.200 5.200A7.200 7.200 0 1 1 6 15" /></Icon>
            </TitleButton>
            <TitleButton $after={23} aria-label="Redo">
              <Icon size={13} color="#fff" w={1.2}><path d="M15 .8v4.500h-4.500M14.800 5.200A7.200 7.200 0 1 0 13.500 12.500" /></Icon>
            </TitleButton>
            <TitleButton><Icon size={13} color="#fff" w={1.2}>{calibrationPath}</Icon>Calibration</TitleButton>
            <TitleText>Untitled</TitleText>
            <WindowButton aria-label="Minimize"><Icon size={11} color="#fff" w={1.6}><path d="M1 8h14" /></Icon></WindowButton>
            <WindowButton aria-label="Maximize"><Icon size={11} color="#fff" w={1.6}><rect x="1" y="1" width="14" height="14" rx="1" /></Icon></WindowButton>
            <WindowButton aria-label="Close"><Icon size={11} color="#fff" w={1.6}><path d="M1 1l14 14M15 1L1 15" /></Icon></WindowButton>
          </TitleBar>
          <TabBar>
            <HomeButton aria-label="Home">
              <Icon size={17} color="#fff"><path d="M8 .6L.7 6.500v8.800h4.500V10q0-2 1.500-2h2.600q1.500 0 1.500 2v5.300h4.500V6.500z" /></Icon>
            </HomeButton>
            {mainTabs.map(([name, glyph], i) => (
              <MainTab key={name} $active={i === 0}>
                <Icon size={17} color="#fff">{glyph}</Icon>
                {name}
              </MainTab>
            ))}
            <TabActions>
              <SplitButton>
                <SplitMenu aria-label="Slice options"><Chevron color="#fff" /></SplitMenu>
                <SplitMain $width={107}>Slice plate</SplitMain>
              </SplitButton>
              <SplitButton>
                <SplitMenu aria-label="Print options"><Chevron color="#fff" /></SplitMenu>
                <SplitMain $width={109}>Print plate</SplitMain>
              </SplitButton>
            </TabActions>
          </TabBar>
          <Body>
            <SettingsPanel />
            <PlateView />
          </Body>
        </AppWindow>
        <DesktopEdge>
          <Icon size={11} box={11} color="#c8c8c4">
            <path d="M.5 3.500v-3h3M7.500.5h3v3M10.500 7.500v3h-3M3.500 10.500h-3v-3" />
          </Icon>
        </DesktopEdge>
      </DesktopRow>
      <DesktopFoot>
        <svg width="1300" height="8" viewBox="0 0 1300 8" fill="none" stroke="#b9b9ae" aria-hidden="true">
          <path strokeDasharray="2 5 3 9 2 14" d="M162 1.500H300M600 1.500H1300" opacity=".4" />
          <path strokeDasharray="2 3 4 5 1 6" d="M162 7.500H385" />
          <path d="M572 3.500H900" />
        </svg>
      </DesktopFoot>
    </Desktop>
  );
}
